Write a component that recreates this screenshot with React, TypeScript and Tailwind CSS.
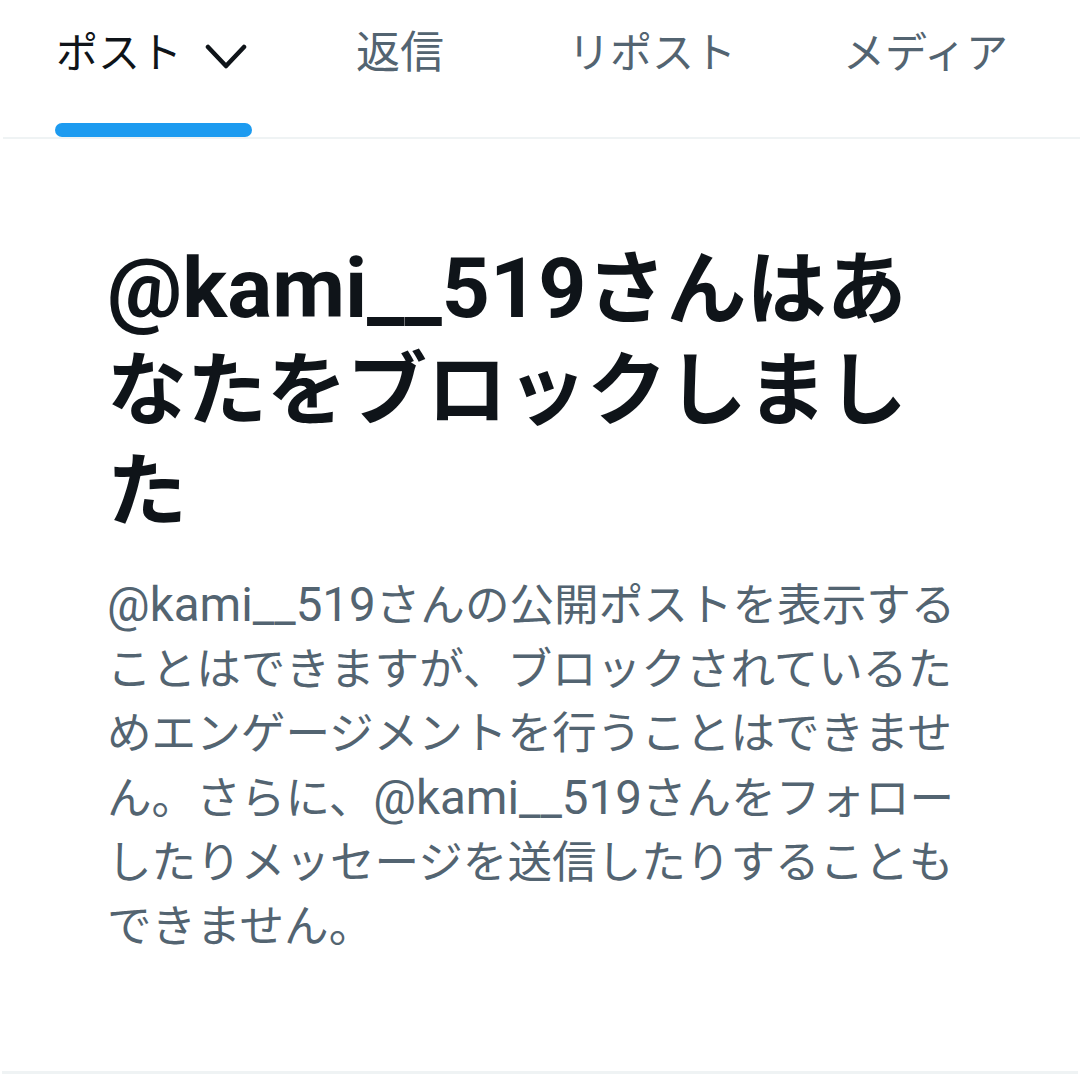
import React from "react";

const FONT = { fontFamily: 'Roboto, "Noto Sans CJK JP", sans-serif' };

function Chevron() {
  return (
    <svg width="42" height="28" viewBox="0 0 42 28" className="ml-[23px] mt-[6px] shrink-0">
      <path d="M3 4 L21 23 L39 4" fill="none" stroke="#0f1419" strokeWidth="4.5" strokeLinecap="round" strokeLinejoin="round" />
    </svg>
  );
}

function Handle({ size }: { size: "title" | "body" }) {
  return (
    <span className={size === "title" ? "text-[84px]" : "text-[47.5px]"}>@kami__519</span>
  );
}

export default function App() {
  return (
    <div className="w-[1080px] h-[1080px] bg-white overflow-hidden flex flex-col" style={FONT}>
      <div className="flex h-[137px] pl-[55px] items-start">
        <div className="flex flex-col w-[197px] h-full shrink-0">
          <div className="flex items-center pt-[32px] text-[42px] leading-[44px] text-[#0f1419] whitespace-nowrap">
            <span className="pl-[1px]">ポスト</span>
            <Chevron />
          </div>
          <div className="mt-auto h-[14px] w-[197px] rounded-full bg-[#1d9bf0]" />
        </div>
        <div className="ml-[104px] pt-[31px] text-[44px] leading-[44px] text-[#536471] whitespace-nowrap">返信</div>
        <div className="ml-[124px] pt-[32px] text-[42px] leading-[44px] text-[#536471] whitespace-nowrap">リポスト</div>
        <div className="ml-[107px] pt-[32px] text-[42px] leading-[44px] text-[#536471] whitespace-nowrap">メディア</div>
      </div>
      <div className="h-[2px] bg-[#eff3f4] ml-[3px]" />
      <div className="px-[107px] pt-[99px]">
        <div className="text-[80px] leading-[101px] font-bold text-[#0f1419]">
          <div className="whitespace-nowrap"><Handle size="title" />さんはあ</div>
          <div className="whitespace-nowrap">なたをブロックしまし</div>
          <div className="whitespace-nowrap">た</div>
        </div>
        <div className="mt-[30px] text-[44.6px] leading-[64px] text-[#536471]">
          <div className="whitespace-nowrap"><Handle size="body" />さんの公開ポストを表示する</div>
          <div className="whitespace-nowrap">ことはできますが、ブロックされているた</div>
          <div className="whitespace-nowrap">めエンゲージメントを行うことはできませ</div>
          <div className="whitespace-nowrap">ん。さらに、<Handle size="body" />さんをフォロー</div>
          <div className="whitespace-nowrap">したりメッセージを送信したりすることも</div>
          <div className="whitespace-nowrap">できません。</div>
        </div>
      </div>
      <div className="mt-auto mb-[6px] mx-[2px] h-[3px] bg-[#eff3f4]" />
    </div>
  );
}
